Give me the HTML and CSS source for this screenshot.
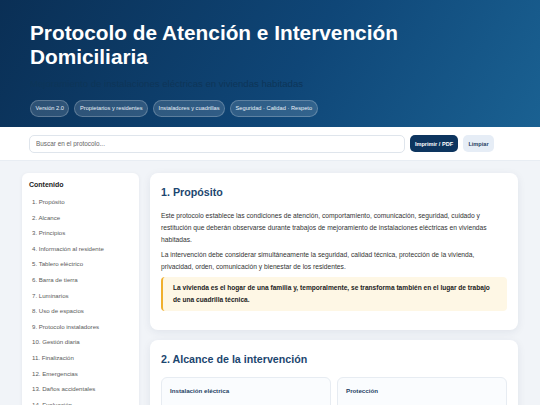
FILE: index.html
```html
<!DOCTYPE html>
<html lang="es">
<head>
<meta charset="utf-8">
<title>Protocolo de Atención e Intervención Domiciliaria</title>
<link rel="stylesheet" href="styles.css">
</head>
<body>
<header class="hero">
  <h1 class="hero-title">Protocolo de Atención e Intervención<br>Domiciliaria</h1>
  <p class="hero-sub">Mejoramiento de instalaciones eléctricas en viviendas habitadas</p>
  <div class="tags">
    <span class="tag">Versión 2.0</span>
    <span class="tag">Propietarios y residentes</span>
    <span class="tag">Instaladores y cuadrillas</span>
    <span class="tag">Seguridad · Calidad · Respeto</span>
  </div>
</header>
<div class="toolbar">
  <input class="search" type="text" placeholder="Buscar en el protocolo...">
  <button class="btn btn-primary">Imprimir / PDF</button>
  <button class="btn btn-light">Limpiar</button>
</div>
<div class="layout">
  <nav class="toc">
    <div class="toc-title">Contenido</div>
    <ul class="toc-list">
      <li>1. Propósito</li>
      <li>2. Alcance</li>
      <li>3. Principios</li>
      <li>4. Información al residente</li>
      <li>5. Tablero eléctrico</li>
      <li>6. Barra de tierra</li>
      <li>7. Luminarios</li>
      <li>8. Uso de espacios</li>
      <li>9. Protocolo instaladores</li>
      <li>10. Gestión diaria</li>
      <li>11. Finalización</li>
      <li>12. Emergencias</li>
      <li>13. Daños accidentales</li>
      <li>14. Evaluación</li>
    </ul>
  </nav>
  <main class="content">
    <section class="card">
      <h2 class="card-title">1. Propósito</h2>
      <p class="text">Este protocolo establece las condiciones de atención, comportamiento, comunicación, seguridad, cuidado y restitución que deberán observarse durante trabajos de mejoramiento de instalaciones eléctricas en viviendas habitadas.</p>
      <p class="text">La intervención debe considerar simultáneamente la seguridad, calidad técnica, protección de la vivienda, privacidad, orden, comunicación y bienestar de los residentes.</p>
      <div class="callout">La vivienda es el hogar de una familia y, temporalmente, se transforma también en el lugar de trabajo de una cuadrilla técnica.</div>
    </section>
    <section class="card">
      <h2 class="card-title">2. Alcance de la intervención</h2>
      <div class="grid">
        <div class="box">
          <h3 class="box-title">Instalación eléctrica</h3>
          <ul class="box-list"><li>Circuitos y canalizaciones</li></ul>
        </div>
        <div class="box">
          <h3 class="box-title">Protección</h3>
          <ul class="box-list"><li>Tablero eléctrico</li></ul>
        </div>
      </div>
    </section>
  </main>
</div>
</body>
</html>
```
FILE: styles.css
```css
* { box-sizing: border-box; }
html, body { margin: 0; padding: 0; }
body {
  font-family: "Liberation Sans", Arial, sans-serif;
  background: #f1f4f8;
  color: #333;
  width: 540px;
  overflow: hidden;
}
.hero {
  background: linear-gradient(120deg, #0a2f55 0%, #0f4677 55%, #1a6192 100%);
  padding: 21px 30px 11px;
  height: 127px;
}
.hero-title {
  margin: 0;
  color: #fff;
  font-size: 20.8px;
  line-height: 24px;
  font-weight: 700;
}
.hero-sub {
  margin: 9px 0 0;
  font-size: 9.6px;
  line-height: 12px;
  color: #0d3558;
}
.tags {
  display: flex;
  gap: 5px;
  margin-top: 10px;
}
.tag {
  display: inline-block;
  height: 17px;
  line-height: 15px;
  padding: 0 4.5px;
  font-size: 5.7px;
  color: #e8f0f8;
  background: rgba(255,255,255,0.14);
  border: 1px solid rgba(255,255,255,0.22);
  border-radius: 9px;
  white-space: nowrap;
}
.toolbar {
  display: flex;
  align-items: center;
  gap: 5px;
  background: #fff;
  height: 34px;
  padding: 0 46px 0 29px;
  border-bottom: 1px solid #e8edf3;
}
.search {
  flex: 1;
  height: 18px;
  border: 1px solid #dfe5ec;
  border-radius: 5px;
  padding: 0 6px;
  font-family: inherit;
  font-size: 6.4px;
  color: #333;
  outline: none;
}
.search::placeholder { color: #666; }
.btn {
  height: 17px;
  border: none;
  border-radius: 5px;
  font-family: inherit;
  font-size: 5.6px;
  font-weight: 700;
  padding: 0;
  white-space: nowrap;
  flex: none;
}
.btn-primary { background: #0d355f; color: #fff; width: 48px; }
.btn-light { background: #e6edf6; color: #1f3f63; width: 31px; }
.layout {
  display: flex;
  align-items: flex-start;
  gap: 11px;
  padding: 12px 22px 0;
}
.toc {
  width: 117px;
  flex: none;
  background: #fff;
  border-radius: 6px;
  padding: 8px 7px 10px;
  box-shadow: 0 1px 4px rgba(20,40,70,0.06);
}
.toc-title {
  font-size: 7px;
  font-weight: 700;
  color: #222;
  line-height: 8px;
}
.toc-list {
  list-style: none;
  margin: 5px 0 0;
  padding: 0 0 0 3px;
}
.toc-list li {
  font-size: 6.1px;
  line-height: 15.6px;
  color: #5a5a5a;
  white-space: nowrap;
}
.content {
  flex: 1;
  display: flex;
  flex-direction: column;
  gap: 10px;
}
.card {
  background: #fff;
  border-radius: 8px;
  padding: 12px 11px 19px;
  box-shadow: 0 2px 8px rgba(20,40,80,0.08);
}
.card-title {
  margin: 0 0 11px;
  font-size: 10.7px;
  line-height: 14px;
  color: #1c466f;
  font-weight: 700;
}
.text {
  margin: 0 0 3px;
  font-size: 6.7px;
  line-height: 12px;
  color: #333;
}
.callout {
  margin-top: 4px;
  background: #fef7e5;
  border-left: 2px solid #f0b02e;
  border-radius: 4px;
  padding: 5px 10px;
  font-size: 6.6px;
  line-height: 12px;
  font-weight: 700;
  color: #222;
}
.grid {
  display: grid;
  grid-template-columns: 1fr 1fr;
  gap: 6px;
}
.box {
  background: #fafcfe;
  border: 1px solid #e7ecf2;
  border-radius: 6px;
  padding: 8px 8px;
}
.box-title {
  margin: 0;
  font-size: 6.2px;
  line-height: 10px;
  color: #1f3f63;
  font-weight: 700;
}
.box-list {
  margin: 6px 0 0;
  padding-left: 14px;
  font-size: 6px;
  line-height: 10px;
  color: #555;
}
```
